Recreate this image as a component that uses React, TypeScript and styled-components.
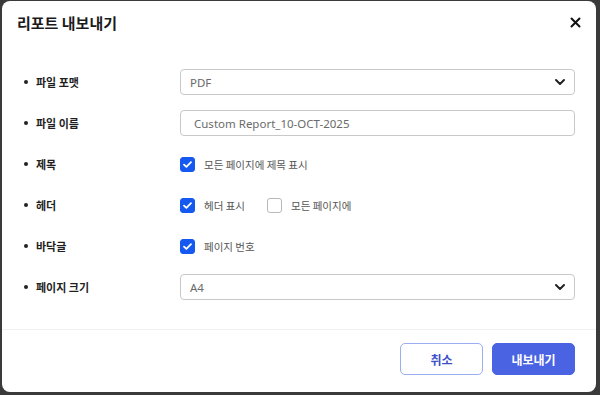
import styled, { createGlobalStyle } from "styled-components";

const Global = createGlobalStyle`
  html, body {
    margin: 0;
    padding: 0;
    background: #3a3a3a;
  }
  body {
    font-family: "Noto Sans", "Noto Sans CJK KR", sans-serif;
  }
`;

const Frame = styled.div`
  width: 600px;
  height: 395px;
  box-sizing: border-box;
  padding: 1px 4px 3px 2px;
  display: flex;
`;

const Dialog = styled.div`
  flex: 1;
  background: #fff;
  border-radius: 8px;
  display: flex;
  flex-direction: column;
`;

const Header = styled.div`
  display: flex;
  align-items: center;
  justify-content: space-between;
  height: 42px;
  padding: 0 13px 0 15px;
`;

const Title = styled.h1`
  margin: 0;
  font-size: 15px;
  font-weight: 700;
  color: #1a1a1a;
  font-family: "Noto Sans CJK KR", sans-serif;
`;

const CloseBtn = styled.button`
  border: none;
  background: none;
  padding: 0;
  width: 16px;
  height: 16px;
  display: flex;
  align-items: center;
  justify-content: center;
  cursor: pointer;
`;

const Body = styled.div`
  flex: 1;
  display: flex;
  flex-direction: column;
  gap: 15px;
  padding: 26px 21px 0 22px;
  border-bottom: 1px solid #f1f1f1;
`;

const Row = styled.div`
  display: flex;
  align-items: center;
  height: 26px;
`;

const Label = styled.div`
  width: 156px;
  display: flex;
  align-items: center;
  gap: 8px;
  font-size: 11px;
  font-weight: 700;
  color: #1f1f1f;
  font-family: "Noto Sans CJK KR", sans-serif;
  &::before {
    content: "";
    width: 4px;
    height: 4px;
    border-radius: 50%;
    background: #222;
  }
`;

const Field = styled.div<{ $pad?: number }>`
  flex: 1;
  height: 26px;
  box-sizing: border-box;
  border: 1px solid #c9c9c9;
  border-radius: 4px;
  display: flex;
  align-items: center;
  justify-content: space-between;
  padding: 0 8px 0 ${(p) => p.$pad ?? 9}px;
  font-size: 11.5px;
  color: #6a6a6a;
`;

const Checks = styled.div`
  display: flex;
  align-items: center;
  gap: 22px;
`;

const CheckItem = styled.label`
  display: flex;
  align-items: center;
  gap: 9px;
  font-size: 10.5px;
  color: #555;
  font-family: "Noto Sans CJK KR", sans-serif;
`;

const Box = styled.span<{ $on: boolean }>`
  width: 15px;
  height: 15px;
  box-sizing: border-box;
  border-radius: 3px;
  display: flex;
  align-items: center;
  justify-content: center;
  background: ${(p) => (p.$on ? "#1559f0" : "#fff")};
  border: 1px solid ${(p) => (p.$on ? "#1559f0" : "#b8b8b8")};
`;

const Footer = styled.div`
  height: 58px;
  display: flex;
  align-items: center;
  justify-content: flex-end;
  gap: 9px;
  padding: 0 21px 4px 0;
`;

const Button = styled.button<{ $primary?: boolean }>`
  width: 83px;
  height: 32px;
  border-radius: 5px;
  font-size: 12px;
  font-weight: 700;
  font-family: "Noto Sans CJK KR", sans-serif;
  cursor: pointer;
  background: ${(p) => (p.$primary ? "#4a63e2" : "#fff")};
  color: ${(p) => (p.$primary ? "#fff" : "#3b4fc8")};
  border: 1.5px solid ${(p) => (p.$primary ? "#4a63e2" : "#9aaef0")};
`;

const Chevron = () => (
  <svg width="12" height="12" viewBox="0 0 12 12">
    <path d="M2 4l4 4 4-4" fill="none" stroke="#222" strokeWidth="2" strokeLinecap="round" strokeLinejoin="round" />
  </svg>
);

const Tick = () => (
  <svg width="11" height="11" viewBox="0 0 11 11">
    <path d="M2 5.6l2.4 2.3L9 3.2" fill="none" stroke="#fff" strokeWidth="1.8" strokeLinecap="round" strokeLinejoin="round" />
  </svg>
);

function Check({ on, text }: { on: boolean; text: string }) {
  return (
    <CheckItem>
      <Box $on={on}>{on && <Tick />}</Box>
      {text}
    </CheckItem>
  );
}

export default function App() {
  return (
    <Frame>
      <Global />
      <Dialog>
        <Header>
          <Title>리포트 내보내기</Title>
          <CloseBtn>
            <svg width="11" height="11" viewBox="0 0 11 11">
              <path d="M1.5 1.5l8 8M9.5 1.5l-8 8" stroke="#111" strokeWidth="2" strokeLinecap="round" />
            </svg>
          </CloseBtn>
        </Header>
        <Body>
          <Row>
            <Label>파일 포맷</Label>
            <Field>
              PDF
              <Chevron />
            </Field>
          </Row>
          <Row>
            <Label>파일 이름</Label>
            <Field $pad={13}>Custom Report_10-OCT-2025</Field>
          </Row>
          <Row>
            <Label>제목</Label>
            <Checks>
              <Check on text="모든 페이지에 제목 표시" />
            </Checks>
          </Row>
          <Row>
            <Label>헤더</Label>
            <Checks>
              <Check on text="헤더 표시" />
              <Check on={false} text="모든 페이지에" />
            </Checks>
          </Row>
          <Row>
            <Label>바닥글</Label>
            <Checks>
              <Check on text="페이지 번호" />
            </Checks>
          </Row>
          <Row>
            <Label>페이지 크기</Label>
            <Field>
              A4
              <Chevron />
            </Field>
          </Row>
        </Body>
        <Footer>
          <Button>취소</Button>
          <Button $primary>내보내기</Button>
        </Footer>
      </Dialog>
    </Frame>
  );
}
